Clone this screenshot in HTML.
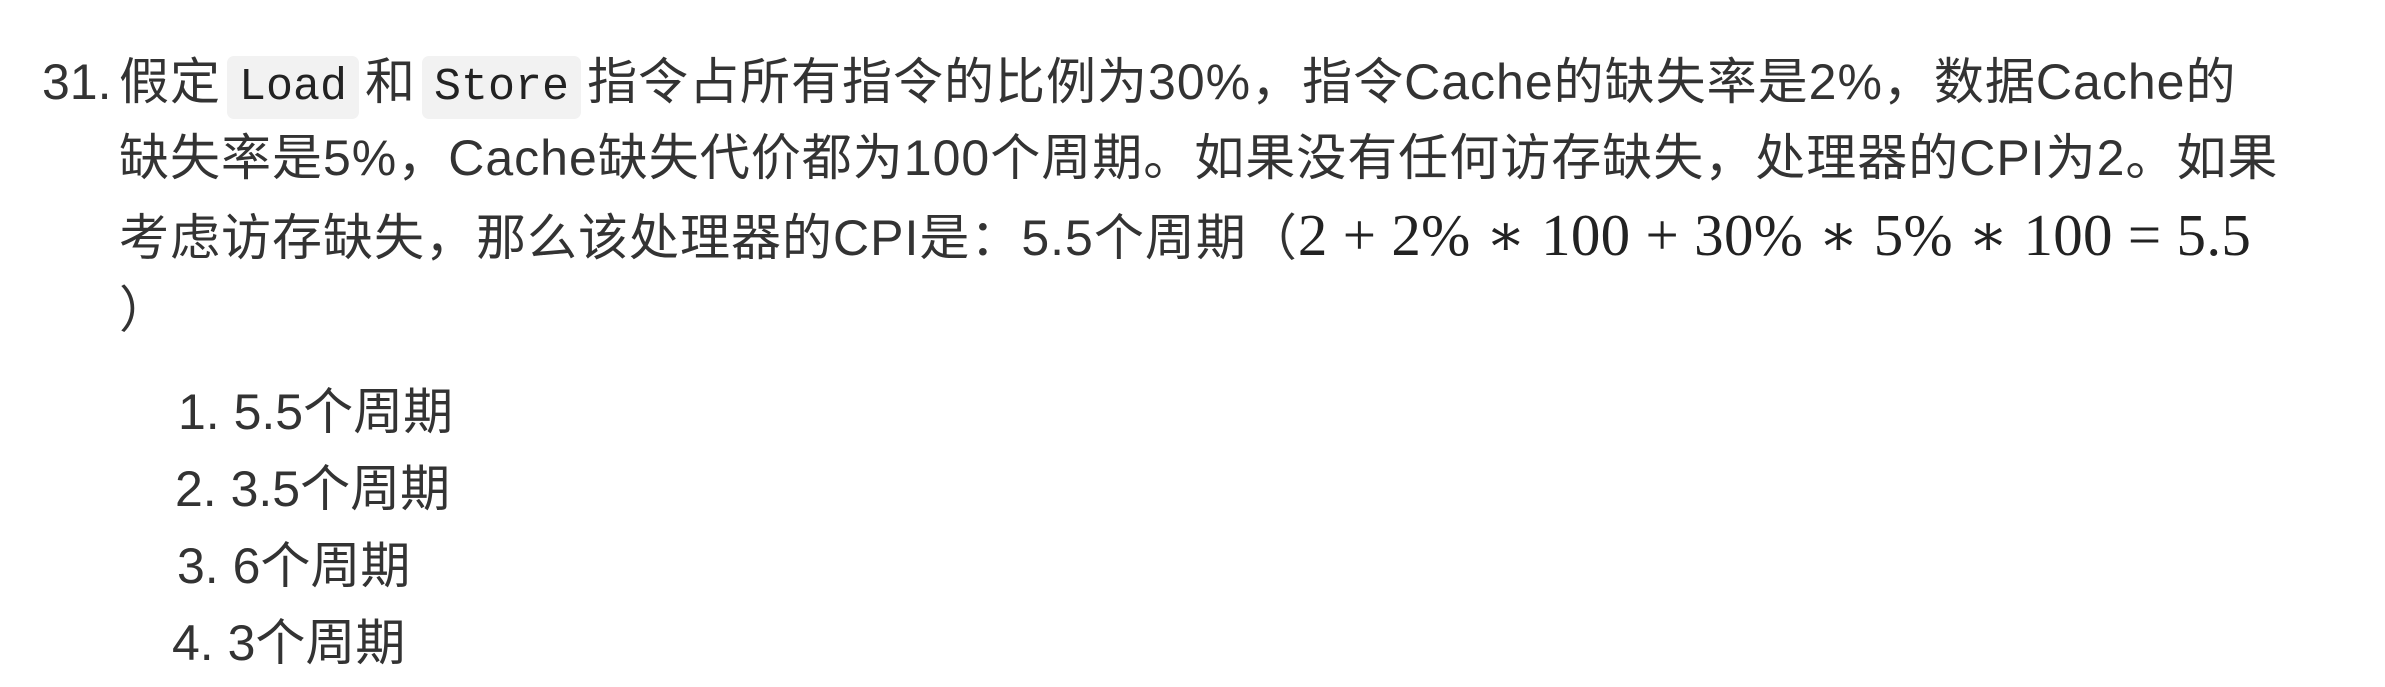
<!DOCTYPE html>
<html><head><meta charset="utf-8"><style>
html,body{margin:0;padding:0;background:#fff;}
body{width:2385px;height:687px;position:relative;overflow:hidden;color:#333;font-family:"Liberation Sans","Noto Sans CJK SC",sans-serif;font-size:50px;}
.l{position:absolute;white-space:nowrap;height:77px;line-height:77px;letter-spacing:1px;}
.li{letter-spacing:0;}
code{font-family:"Liberation Mono",monospace;font-size:45px;background:#f2f2f2;border-radius:7px;padding:6px 12px;color:#222;margin:0 6px;letter-spacing:0;}
.m{font-family:"Liberation Serif","DejaVu Serif",serif;font-size:59px;color:#222;letter-spacing:0.3px;}
</style></head><body>
<div class="l" style="left:42px;top:44px;letter-spacing:0">31.</div>
<div class="l" style="left:119px;top:44px;">假定<code>Load</code>和<code>Store</code>指令占所有指令的比例为30%，指令Cache的缺失率是2%，数据Cache的</div>
<div class="l" style="left:119px;top:120px;">缺失率是5%，Cache缺失代价都为100个周期。如果没有任何访存缺失，处理器的CPI为2。如果</div>
<div class="l" style="left:119px;top:197px;">考虑访存缺失，那么该处理器的CPI是：5.5个周期（<span class="m">2 + 2% ∗ 100 + 30% ∗ 5% ∗ 100 = 5.5</span></div>
<div class="l" style="left:119px;top:272px;">）</div>
<div class="l li" style="left:178px;top:374px;">1. 5.5个周期</div>
<div class="l li" style="left:175px;top:451px;">2. 3.5个周期</div>
<div class="l li" style="left:177px;top:528px;">3. 6个周期</div>
<div class="l li" style="left:172px;top:605px;">4. 3个周期</div>
</body></html>
